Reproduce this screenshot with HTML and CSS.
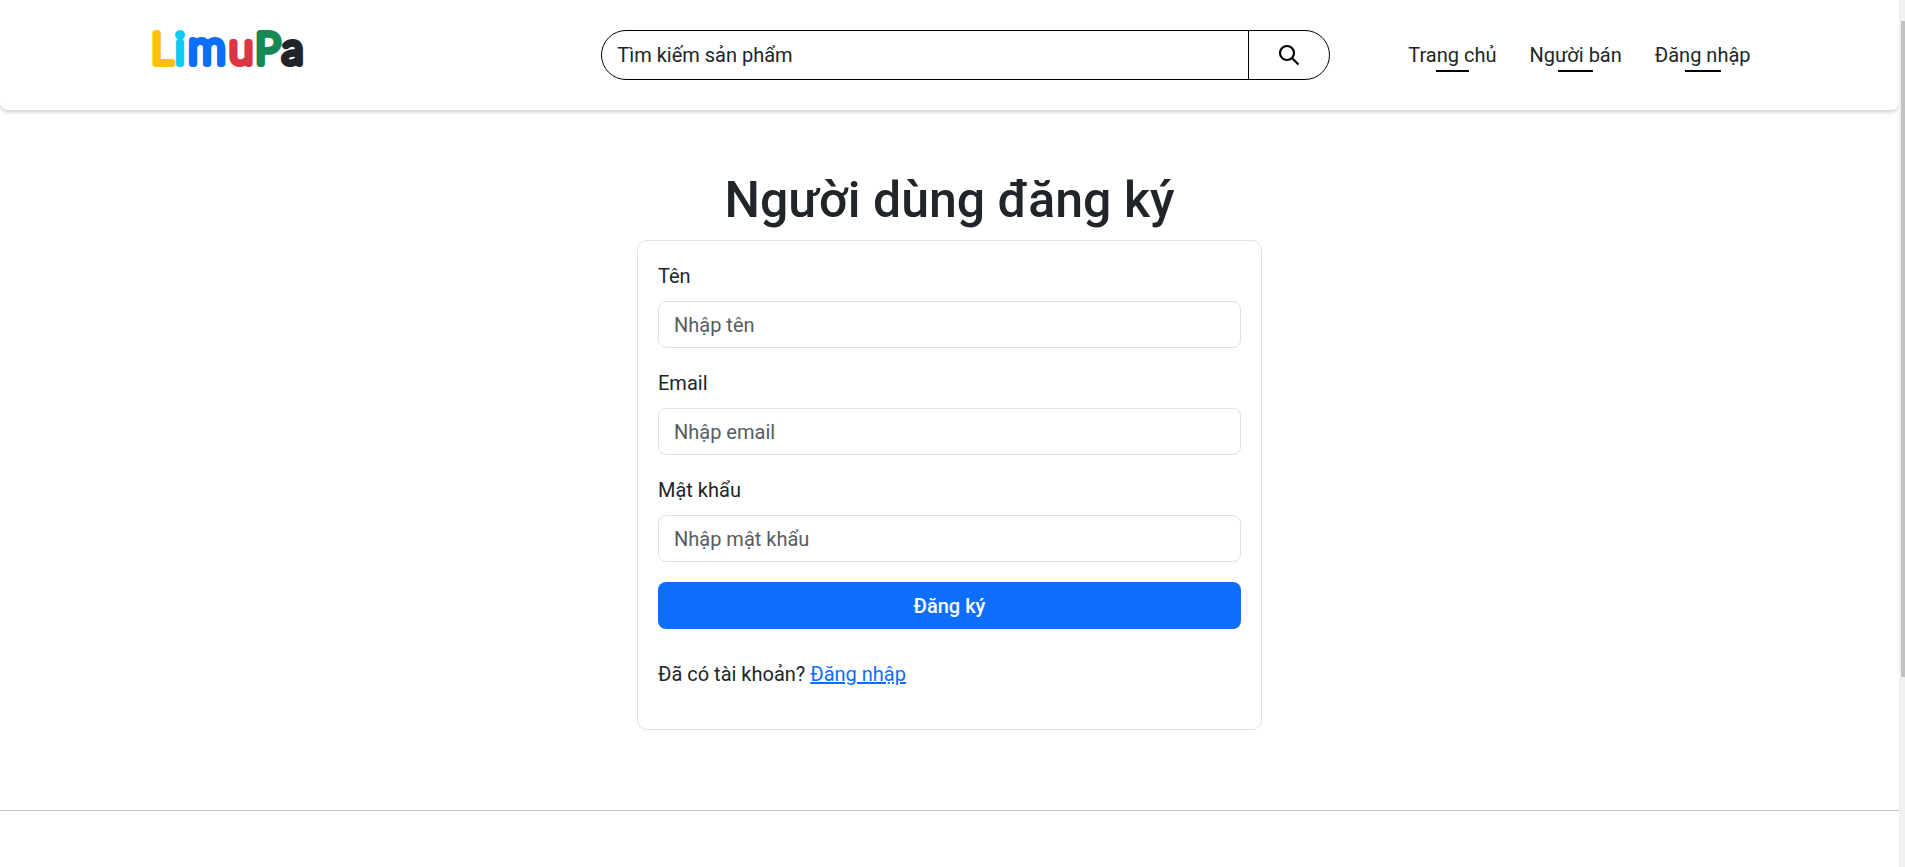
FILE: index.html
```html
<!DOCTYPE html>
<html lang="vi">
<head>
<meta charset="utf-8">
<meta name="viewport" content="width=device-width, initial-scale=1">
<title>LimuPa - Người dùng đăng ký</title>
<link rel="stylesheet" href="styles.css">
</head>
<body>
<div class="frame">
  <div class="page">
    <header class="header">
      <div class="header-inner">
        <a class="logo" href="#" aria-label="LimuPa">
          <svg width="160" height="44" viewBox="0 0 160 44" aria-hidden="true">
            <text class="logo-text" y="38"><tspan class="c-yellow" x="0">L</tspan><tspan class="c-cyan" x="24">i</tspan><tspan class="c-blue" x="37">m</tspan><tspan class="c-red" x="78">u</tspan><tspan class="c-green" x="104">P</tspan><tspan class="c-dark" x="131">a</tspan></text>
          </svg>
        </a>
        <form class="search" role="search">
          <input class="search-input" type="search" placeholder="Tìm kiếm sản phẩm" aria-label="Tìm kiếm sản phẩm">
          <button class="search-button" type="button" aria-label="Tìm kiếm">
            <svg width="22" height="22" viewBox="0 0 22 22" fill="none" stroke="#000" stroke-width="2.2" aria-hidden="true"><circle cx="9" cy="9" r="7"/><path d="M14 14l6.500 6.500"/></svg>
          </button>
        </form>
        <nav class="nav">
          <a class="nav-link" href="#">Trang chủ</a>
          <a class="nav-link" href="#">Người bán</a>
          <a class="nav-link" href="#">Đăng nhập</a>
        </nav>
      </div>
    </header>
    <main class="main">
      <h1 class="title">Người dùng đăng ký</h1>
      <form class="card">
        <div class="field">
          <label class="label" for="name">Tên</label>
          <input class="control" id="name" type="text" placeholder="Nhập tên">
        </div>
        <div class="field">
          <label class="label" for="email">Email</label>
          <input class="control" id="email" type="email" placeholder="Nhập email">
        </div>
        <div class="field">
          <label class="label" for="password">Mật khẩu</label>
          <input class="control" id="password" type="password" placeholder="Nhập mật khẩu">
        </div>
        <button class="submit" type="button">Đăng ký</button>
        <p class="hint">Đã có tài khoản? <a class="hint-link" href="#">Đăng nhập</a></p>
      </form>
    </main>
    <footer class="footer"></footer>
  </div>
  <div class="scroll-track" aria-hidden="true"><div class="scroll-thumb"></div></div>
</div>
</body>
</html>
```
FILE: styles.css
```css
* {
  box-sizing: border-box;
}

body {
  margin: 0;
  background: #fff;
  color: #212529;
  font: 400 20px/30px Roboto, "Noto Sans", sans-serif;
}

.frame {
  display: flex;
  height: 100vh;
}

.page {
  flex: 1;
  min-width: 0;
  overflow: hidden;
}

.header {
  padding: 26px 0 30px;
  border-radius: 0 0 8px 8px;
  box-shadow: 0 2px 4px rgba(0, 0, 0, 0.2);
}

.header-inner {
  display: grid;
  grid-template-columns: minmax(160px, 1fr) minmax(0, 729px) auto;
  column-gap: 66px;
  align-items: start;
  max-width: 1650px;
  margin: 0 auto;
  padding: 0 12px 0 26px;
}

.logo {
  display: block;
  height: 44px;
}

.logo svg {
  display: block;
  overflow: visible;
}

.logo-text {
  font: 300 44px Lato, sans-serif;
  stroke-width: 6px;
  stroke-linejoin: round;
}

.c-yellow { fill: #ffc107; stroke: #ffc107; }
.c-cyan { fill: #0dcaf0; stroke: #0dcaf0; }
.c-blue { fill: #0d6efd; stroke: #0d6efd; font-size: 47px; }
.c-red { fill: #dc3545; stroke: #dc3545; }
.c-green { fill: #198754; stroke: #198754; }
.c-dark { fill: #212529; stroke: #212529; }

.search {
  display: flex;
  height: 50px;
  margin-top: 4px;
  border: 1px solid #000;
  border-radius: 25px;
  overflow: hidden;
}

.search-input {
  flex: 1;
  min-width: 0;
  padding: 0 15px;
  border: 0;
  outline: 0;
  background: none;
  color: #212529;
  font: inherit;
}

.search-input::placeholder {
  color: #212529;
  opacity: 1;
}

.search-button {
  display: flex;
  align-items: center;
  justify-content: center;
  width: 81px;
  padding: 0;
  border: 0;
  border-left: 1px solid #000;
  background: none;
}

.nav {
  display: flex;
  gap: 9px;
  margin-top: 14px;
}

.nav-link {
  position: relative;
  padding: 0 12px;
  color: #212529;
  text-decoration: none;
  white-space: nowrap;
}

.nav-link::after {
  content: "";
  position: absolute;
  left: 35%;
  bottom: -2px;
  width: 30%;
  height: 2px;
  background: #000;
}

.main {
  max-width: 625px;
  margin: 0 auto;
  padding: 60px 0 80px;
}

.title {
  margin: 0 0 10px;
  font-size: 50px;
  font-weight: 500;
  line-height: 60px;
  text-align: center;
}

.card {
  padding: 20px;
  border: 1px solid #dee2e6;
  border-radius: 10px;
}

.field {
  margin-bottom: 20px;
}

.label {
  display: block;
  margin-bottom: 10px;
}

.control {
  display: block;
  width: 100%;
  height: 47px;
  padding: 0 15px;
  border: 1px solid #dee2e6;
  border-radius: 8px;
  background: #fff;
  color: #212529;
  font: inherit;
}

.control::placeholder {
  color: #595c5f;
  opacity: 1;
}

.submit {
  display: block;
  width: 100%;
  height: 47px;
  padding: 0;
  border: 0;
  border-radius: 8px;
  background: #0d6efd;
  color: #fff;
  font: inherit;
  font-weight: 500;
}

.hint {
  margin: 30px 0 20px;
}

.hint-link {
  color: #0d6efd;
}

.footer {
  border-top: 1px solid #c4c4c4;
}

.scroll-track {
  flex: none;
  width: 6px;
  padding: 21px 0 0 2px;
  background: #f1f1f1;
}

.scroll-thumb {
  height: 656px;
  background: #c1c1c1;
}
```
